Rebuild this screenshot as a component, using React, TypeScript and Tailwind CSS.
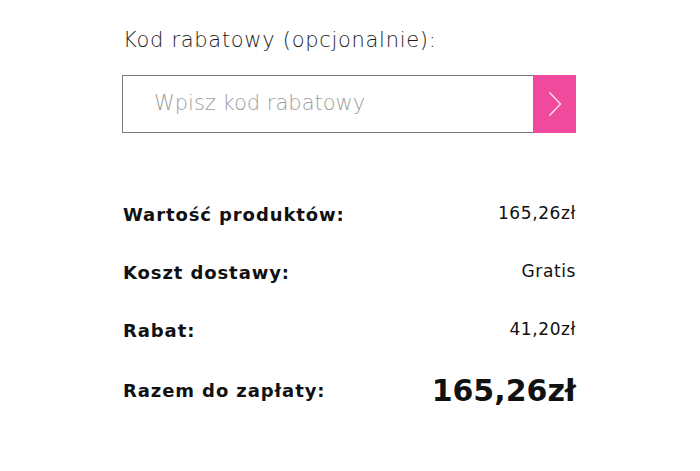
import React from "react";

const light = { fontFamily: "'DejaVu Sans', sans-serif", fontWeight: 200 } as const;

export default function App() {
  const rows = [
    { label: "Wartość produktów:", value: "165,26zł" },
    { label: "Koszt dostawy:", value: "Gratis" },
    { label: "Rabat:", value: "41,20zł" },
  ];
  return (
    <div className="w-[700px] h-[471px] bg-white">
      <div className="ml-[122px] w-[454px] pt-[26px]">
        <div className="pl-[1px] text-[21px] leading-[28px] text-[#1a1a1a] tracking-[0.7px]" style={light}>
          Kod rabatowy (opcjonalnie):
        </div>
        <div className="mt-[21px] flex h-[58px]">
          <div className="flex-1 border border-[#7a7a7a] border-r-0 flex items-center pl-[31px]">
            <span className="text-[21px] text-[#9d9d9d]" style={light}>
              Wpisz kod rabatowy
            </span>
          </div>
          <div className="w-[43px] bg-[#f04a9d] flex items-center justify-center">
            <svg width="14" height="26" viewBox="0 0 14 26" fill="none">
              <path d="M1.5 1.5 L12.5 13 L1.5 24.5" stroke="#fde6f2" strokeWidth="1.3" />
            </svg>
          </div>
        </div>
        <div className="mt-[52px] flex flex-col pl-[1px]" style={{ fontFamily: "'DejaVu Sans', sans-serif" }}>
          {rows.map((r) => (
            <div key={r.label} className="flex justify-between items-center h-[58px]">
              <span className="text-[18px] font-bold text-[#111] tracking-[0.9px]">{r.label}</span>
              <span className="text-[17px] text-[#111] tracking-[0.6px]">{r.value}</span>
            </div>
          ))}
          <div className="flex justify-between items-center h-[62px]">
            <span className="text-[18px] font-bold text-[#111] tracking-[0.9px]">Razem do zapłaty:</span>
            <span className="text-[30px] font-bold text-[#111]">165,26zł</span>
          </div>
        </div>
      </div>
    </div>
  );
}
